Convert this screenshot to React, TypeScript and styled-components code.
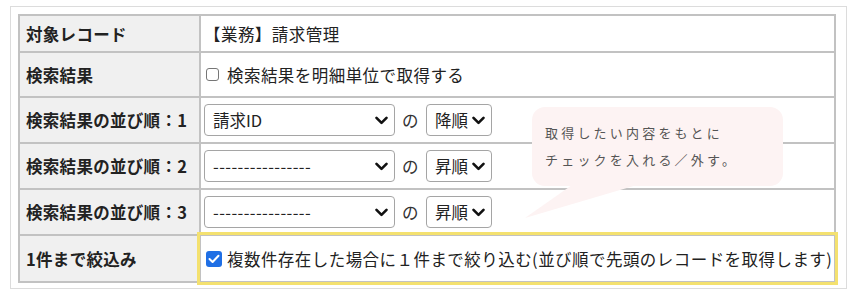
import styled, { createGlobalStyle } from "styled-components";

const GlobalStyle = createGlobalStyle`
  body {
    margin: 0;
    background: #ffffff;
    font-family: "Noto Sans CJK JP", "Noto Sans", sans-serif;
    color: #222222;
  }
`;

const Frame = styled.div`
  position: relative;
  box-sizing: border-box;
  width: 837px;
  margin: 6px 0 0 10px;
  padding: 7px 9px 5px 7px;
  border: 1px solid #dcdcdc;
`;

const Table = styled.table`
  width: 818px;
  border-collapse: collapse;
  font-size: 16.5px;
`;

const Row = styled.tr<{ $h: number }>`
  height: ${(p) => p.$h}px;
`;

const Head = styled.th`
  width: 173px;
  padding: 0 0 0 6px;
  text-align: left;
  font-weight: bold;
  background: #f0f0f0;
  border: 2px solid #c2c2c2;
  white-space: nowrap;
  letter-spacing: 0.3px;
`;

const Cell = styled.td<{ $highlight?: boolean }>`
  padding: 0 0 0 3px;
  border: 2px solid #c2c2c2;
  white-space: nowrap;
  letter-spacing: 0.45px;
  outline: ${(p) => (p.$highlight ? "3px solid #f4e16f" : "none")};
`;

const Line = styled.div<{ $gap: number }>`
  display: flex;
  align-items: center;
  gap: ${(p) => p.$gap}px;
`;

const Check = styled.span<{ $on?: boolean; $size: number }>`
  box-sizing: border-box;
  display: inline-flex;
  align-items: center;
  justify-content: center;
  flex: none;
  width: ${(p) => p.$size}px;
  height: ${(p) => p.$size}px;
  border-radius: 3px;
  border: ${(p) => (p.$on ? "none" : "1px solid #767676")};
  background: ${(p) => (p.$on ? "#1f6fe5" : "#ffffff")};
  margin-left: 2px;
`;

const SelectBox = styled.div<{ $w: number }>`
  box-sizing: border-box;
  display: flex;
  align-items: center;
  justify-content: space-between;
  width: ${(p) => p.$w}px;
  height: 32px;
  padding: 0 6px 0 8px;
  border: 1px solid #a5a5a5;
  border-radius: 4px;
  background: #ffffff;
  font-size: 16.5px;
  letter-spacing: 0;
`;

const SelectText = styled.span<{ $dash?: boolean }>`
  letter-spacing: ${(p) => (p.$dash ? "0.4px" : "0")};
`;

const No = styled.span`
  font-size: 16.5px;
  color: #333333;
`;

const Bubble = styled.div`
  position: absolute;
  left: 521px;
  top: 100px;
  width: 251px;
  height: 79px;
  box-sizing: border-box;
  padding: 12px 0 0 13px;
  border-radius: 13px;
  background: #fdf3f3;
  font-size: 13px;
  line-height: 27px;
  letter-spacing: 3.2px;
  color: #555555;
`;

const Tail = styled.svg`
  position: absolute;
  left: 514px;
  top: 178px;
`;

const Chevron = () => (
  <svg width="13" height="9" viewBox="0 0 13 9">
    <path
      d="M1.5 1.8 L6.5 6.8 L11.5 1.8"
      fill="none"
      stroke="#111"
      strokeWidth="2.6"
      strokeLinecap="round"
      strokeLinejoin="round"
    />
  </svg>
);

const Select = ({ w, text, dash }: { w: number; text: string; dash?: boolean }) => (
  <SelectBox $w={w}>
    <SelectText $dash={dash}>{text}</SelectText>
    <Chevron />
  </SelectBox>
);

const SortRow = ({ n, field, order }: { n: number; field: string; order: string }) => (
  <Row $h={46}>
    <Head>検索結果の並び順：{n}</Head>
    <Cell>
      <Line $gap={7}>
        <Select w={191} text={field} dash={field.startsWith("-")} />
        <No>の</No>
        <Select w={66} text={order} />
      </Line>
    </Cell>
  </Row>
);

export default function App() {
  return (
    <>
      <GlobalStyle />
      <Frame>
        <Table>
          <tbody>
            <Row $h={37}>
              <Head>対象レコード</Head>
              <Cell>【業務】請求管理</Cell>
            </Row>
            <Row $h={45}>
              <Head>検索結果</Head>
              <Cell>
                <Line $gap={8}>
                  <Check $size={13} />
                  <span>検索結果を明細単位で取得する</span>
                </Line>
              </Cell>
            </Row>
            <SortRow n={1} field="請求ID" order="降順" />
            <SortRow n={2} field="----------------" order="昇順" />
            <SortRow n={3} field="----------------" order="昇順" />
            <Row $h={47}>
              <Head>1件まで絞込み</Head>
              <Cell $highlight>
                <Line $gap={5}>
                  <Check $on $size={16}>
                    <svg width="12" height="10" viewBox="0 0 12 10">
                      <path
                        d="M1.5 5 L4.6 8 L10.5 1.8"
                        fill="none"
                        stroke="#fff"
                        strokeWidth="2"
                        strokeLinecap="round"
                        strokeLinejoin="round"
                      />
                    </svg>
                  </Check>
                  <span>複数件存在した場合に１件まで絞り込む(並び順で先頭のレコードを取得します)</span>
                </Line>
              </Cell>
            </Row>
          </tbody>
        </Table>
        <Tail width="115" height="35" viewBox="0 0 115 35">
          <polygon points="47,0 112,0 0,33" fill="#fdf3f3" />
        </Tail>
        <Bubble>
          取得したい内容をもとに
          <br />
          チェックを入れる／外す。
        </Bubble>
      </Frame>
    </>
  );
}
